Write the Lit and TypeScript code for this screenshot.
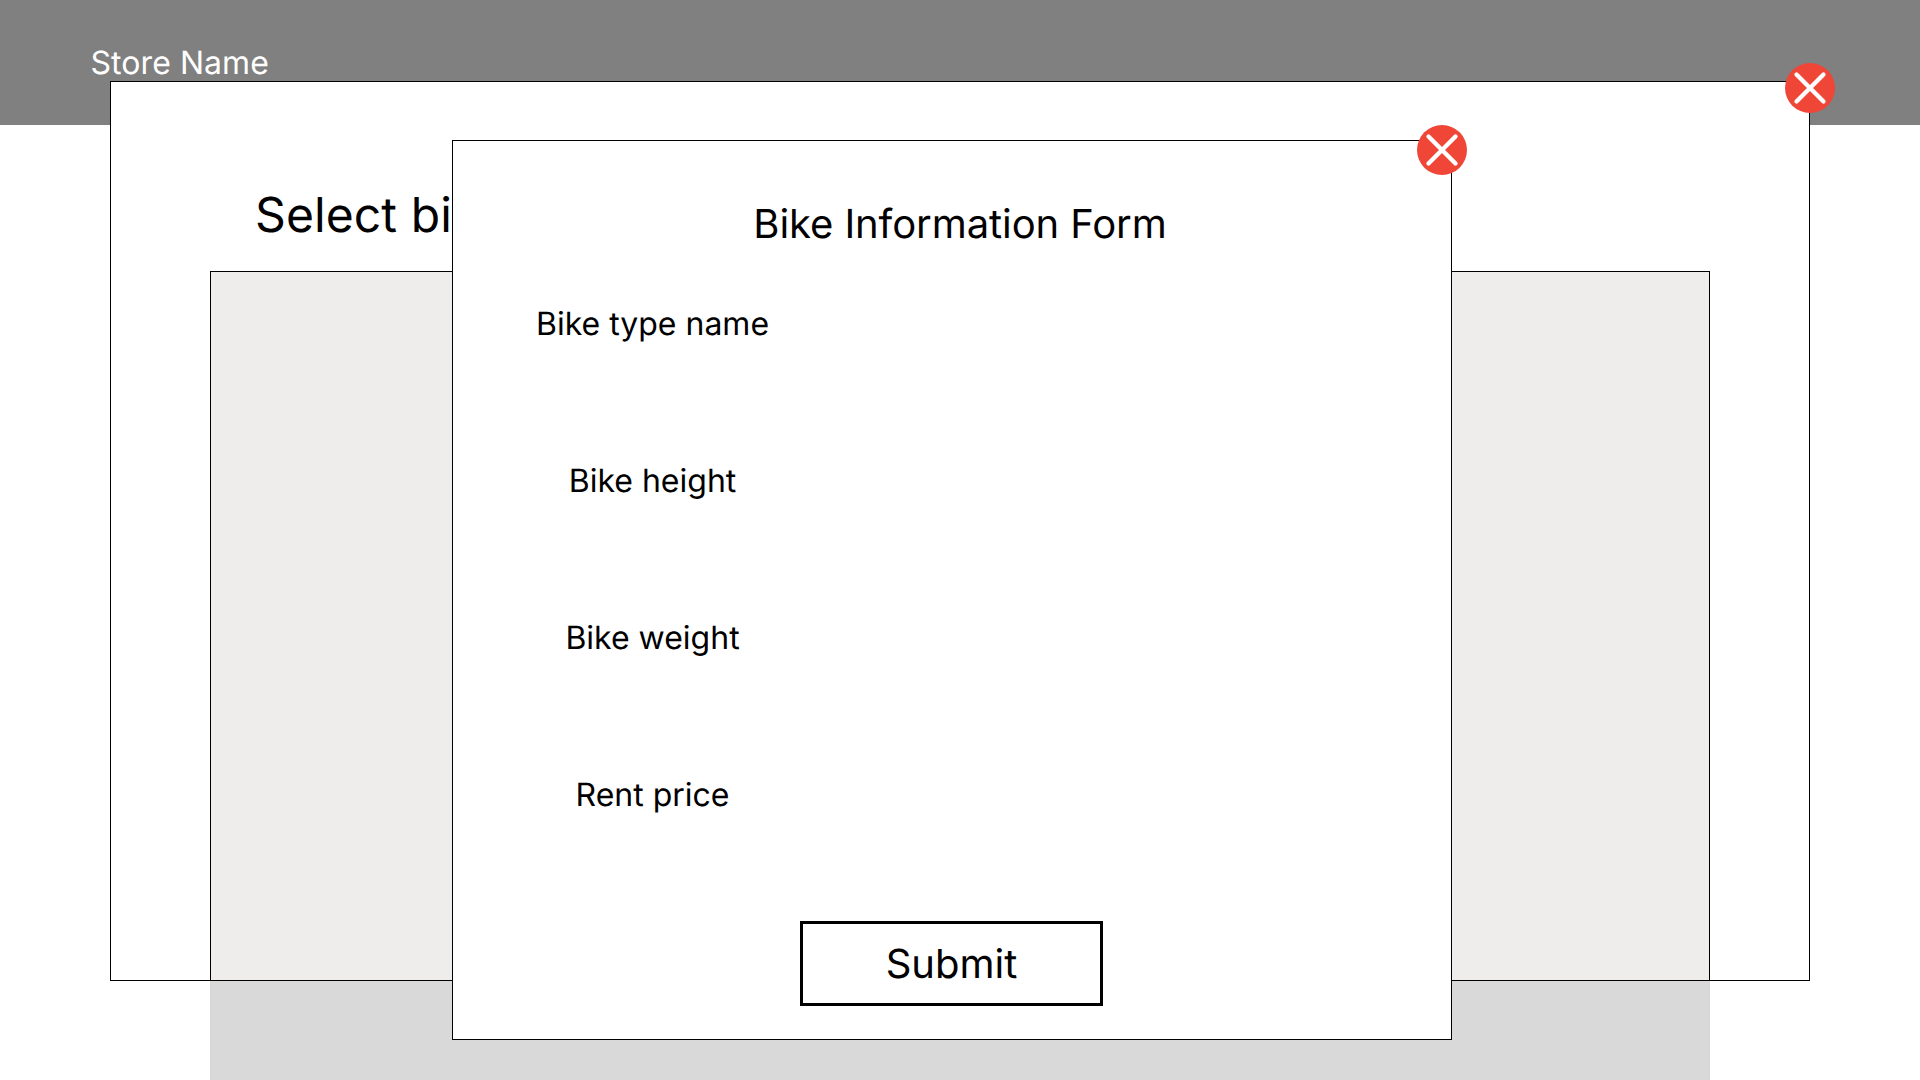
import { LitElement, html, css } from "lit";
import { customElement } from "lit/decorators.js";

@customElement("close-button")
class CloseButton extends LitElement {
  static styles = css`
    :host {
      display: block;
      width: 50px;
      height: 50px;
    }
    .icon {
      display: block;
    }
  `;

  render() {
    return html`
      <svg class="icon" width="50" height="50" viewBox="0 0 50 50" role="img" aria-label="Close">
        <circle cx="25" cy="25" r="25" fill="#ef4637" />
        <path
          d="M11.5 11.5L38.5 38.5M38.5 11.5L11.5 38.5"
          fill="none"
          stroke="#fff"
          stroke-width="4.3"
          stroke-linecap="round"
        />
      </svg>
    `;
  }
}

@customElement("bike-form")
class BikeForm extends LitElement {
  static styles = css`
    :host {
      box-sizing: border-box;
      display: flex;
      flex-direction: column;
      align-items: center;
      background: #fff;
      border: 1px solid #000;
      padding-top: 59px;
    }
    .title {
      margin: 0;
      padding-left: 16px;
      font-size: 40px;
      font-weight: 380;
      line-height: 48px;
      letter-spacing: -0.08px;
    }
    .fields {
      align-self: flex-start;
      display: flex;
      flex-direction: column;
      gap: 118px;
      width: 399px;
      margin-top: 56px;
      text-align: center;
      font-size: 32px;
      line-height: 39px;
    }
    .submit {
      box-sizing: border-box;
      width: 303px;
      height: 85px;
      margin-top: 107px;
      margin-right: 1px;
      padding: 0;
      border: 3px solid #000;
      border-radius: 0;
      background: #fff;
      color: #000;
      font: 380 40px/48px Inter, sans-serif;
      text-rendering: geometricPrecision;
    }
  `;

  private fields = ["Bike type name", "Bike height", "Bike weight", "Rent price"];

  render() {
    return html`
      <h2 class="title">Bike Information Form</h2>
      <div class="fields">${this.fields.map((name) => html`<div>${name}</div>`)}</div>
      <button class="submit">Submit</button>
    `;
  }
}

@customElement("app-root")
class AppRoot extends LitElement {
  static styles = css`
    :host {
      display: block;
      position: relative;
      width: 1920px;
      height: 1080px;
      overflow: hidden;
      background: #fff;
      color: #000;
      font-family: Inter, sans-serif;
      font-weight: 380;
      text-rendering: geometricPrecision;
    }
    .page {
      display: flex;
      flex-direction: column;
      height: 100%;
    }
    .header {
      box-sizing: border-box;
      height: 125px;
      padding: 43px 90.5px 0;
      background: #808080;
      color: #fff;
      font-size: 32px;
      line-height: 39px;
      letter-spacing: 0.06px;
    }
    .content {
      flex: 1;
      margin: 146px 210px 0;
      background: #d9d9d9;
    }
    .dialog {
      position: absolute;
      left: 110px;
      top: 81px;
      box-sizing: border-box;
      display: flex;
      flex-direction: column;
      width: 1700px;
      height: 900px;
      padding: 104px 99px 0;
      border: 1px solid #000;
      background: #fff;
    }
    .heading {
      margin: 0 0 27px;
      padding-left: 45px;
      font-size: 48px;
      font-weight: 380;
      line-height: 58px;
      letter-spacing: 0.1px;
    }
    .list {
      flex: 1;
      border: 1px solid #000;
      border-bottom: 0;
      background: #eeedeb;
    }
    .form {
      position: absolute;
      left: 452px;
      top: 140px;
      width: 1000px;
      height: 900px;
    }
    .close-dialog {
      position: absolute;
      left: 1785px;
      top: 63px;
    }
    .close-form {
      position: absolute;
      left: 1417px;
      top: 125px;
    }
  `;

  render() {
    return html`
      <div class="page">
        <header class="header">Store Name</header>
        <main class="content"></main>
      </div>
      <section class="dialog">
        <h1 class="heading">Select bi</h1>
        <div class="list"></div>
      </section>
      <close-button class="close-dialog"></close-button>
      <bike-form class="form"></bike-form>
      <close-button class="close-form"></close-button>
    `;
  }
}
